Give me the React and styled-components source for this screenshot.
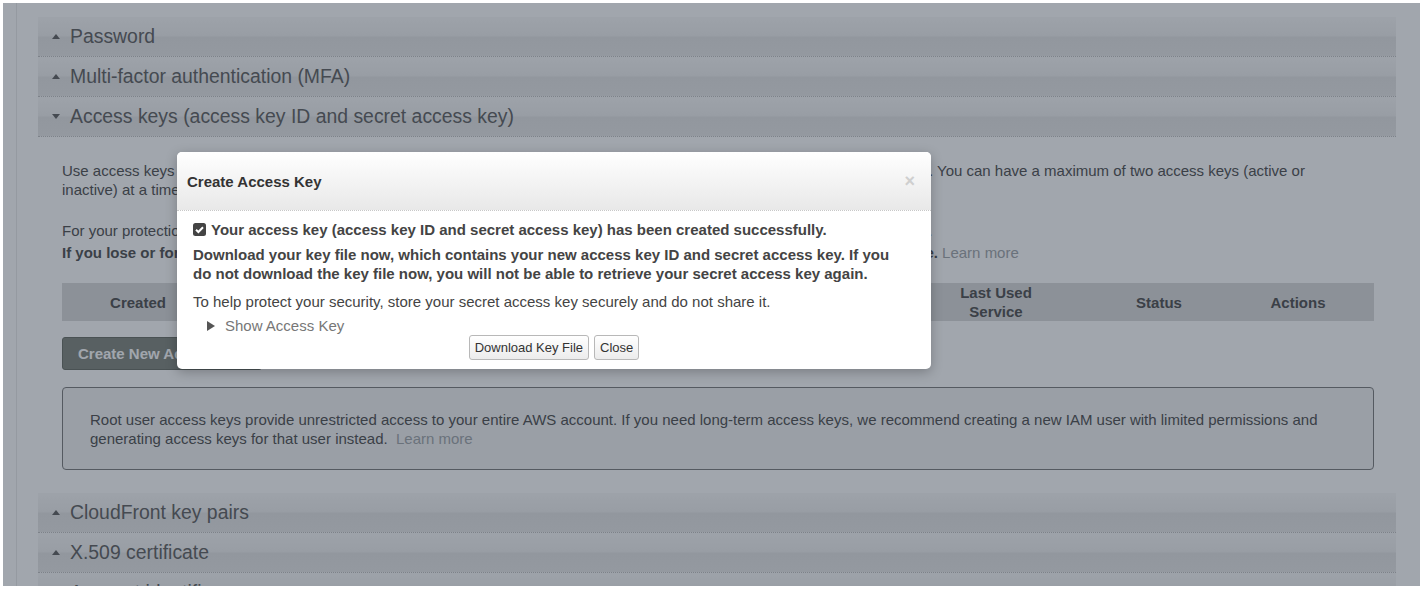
import React from 'react';
import styled, { createGlobalStyle } from 'styled-components';

const Global = createGlobalStyle`
  body {
    margin: 0;
    background: #fff;
    font-family: "Liberation Sans", Arial, sans-serif;
  }
`

const Page = styled.div`
  padding: 3px 5px 4px 3px;
`
const Frame = styled.div`
  position: relative;
  height: 583px;
  overflow: hidden;
  display: flex;
  background: #fff;
`
const LeftGutter = styled.div`
  width: 35px;
  flex-shrink: 0;
  background: linear-gradient(to right, transparent 13px, #ececec 13px, #ececec 14px, transparent 14px);
`
const RightGutter = styled.div`
  width: 24px;
  flex-shrink: 0;
`
const Panel = styled.div`
  flex: 1;
  padding-top: 14px;
`
const SectionHeader = styled.div`
  height: 40px;
  border-bottom: 1px dotted #c4c4c4;
  display: flex;
  align-items: center;
  gap: 10px;
  padding-left: 14px;
  box-sizing: border-box;
  font-size: 19.4px;
  color: #666;
  background: linear-gradient(to bottom, #f9f9f9 0%, #f1f1f1 48%, #e7e7e7 52%, #e9e9e9 100%);
`
const Caret = styled.span`
  width: 0;
  height: 0;
  border-left: 4px solid transparent;
  border-right: 4px solid transparent;
  ${p => p.$open ? 'border-top: 5px solid #666;' : 'border-bottom: 5px solid #666;'}
`
const Content = styled.div`
  padding: 24px 22px 23px 24px;
  font-size: 15px;
  color: #555;
`
const Para = styled.div`
  line-height: 19px;
  max-width: 1280px;
`
const Para2 = styled.div`
  line-height: 22px;
  margin-top: 21px;
`
const Link = styled.span`
  color: #a4a8ac;
  font-weight: normal;
`
const TableHead = styled.div`
  margin-top: 19px;
  height: 38px;
  display: grid;
  grid-template-columns: 152px 250px 232px 200px 200px 126px 152px;
  align-items: center;
  text-align: center;
  background: #dcdcdc;
  font-weight: bold;
  line-height: 19px;
  color: #555;
`
const PrimaryButton = styled.button`
  margin-top: 16px;
  width: 200px;
  height: 33px;
  border: 1px solid #6f746c;
  border-radius: 3px;
  background: #868b82;
  color: #fff;
  font: bold 15px "Liberation Sans", Arial, sans-serif;
  text-align: left;
  white-space: nowrap;
  overflow: hidden;
  padding: 0 0 0 15px;
`
const InfoBox = styled.div`
  margin-top: 17px;
  height: 81px;
  border: 1px solid #808080;
  border-radius: 4px;
  background: #f4f4f4;
  box-sizing: content-box;
  padding: 0 27px;
  display: flex;
  align-items: center;
  line-height: 19px;
`

const Overlay = styled.div`
  position: absolute;
  inset: 0;
  background: rgba(20, 32, 50, 0.4);
`
const Modal = styled.div`
  position: absolute;
  top: 149px;
  left: 174px;
  width: 754px;
  background: #fff;
  border-radius: 5px;
  box-shadow: 0 3px 12px rgba(0, 0, 0, 0.25);
  overflow: hidden;
  color: #444;
  font-size: 15px;
`
const ModalHeader = styled.div`
  height: 59px;
  border-bottom: 1px dotted #c8c8c8;
  background: linear-gradient(to bottom, #ffffff, #e8e8e8);
  display: flex;
  align-items: center;
  justify-content: space-between;
  padding: 1px 16px 0 10px;
  box-sizing: border-box;
`
const ModalTitle = styled.div`
  font-weight: bold;
  color: #333;
`
const CloseX = styled.span`
  color: #cfcfcf;
  font-size: 18px;
  font-weight: bold;
`
const ModalBody = styled.div`
  padding: 9px 16px 9px 16px;
  line-height: 19px;
`
const Success = styled.div`
  display: flex;
  align-items: center;
  gap: 5px;
  font-weight: bold;
`
const Strong = styled.div`
  font-weight: bold;
  margin-top: 6px;
  padding-right: 14px;
`
const Plain = styled.div`
  margin-top: 9px;
`
const ShowKey = styled.div`
  margin-top: 5px;
  padding-left: 14px;
  display: flex;
  align-items: center;
  gap: 10px;
  color: #777;
`
const Tri = styled.span`
  width: 0;
  height: 0;
  border-left: 8px solid #555;
  border-top: 5px solid transparent;
  border-bottom: 5px solid transparent;
`
const Actions = styled.div`
  display: flex;
  justify-content: center;
  gap: 5px;
`
const SmallButton = styled.button`
  height: 25px;
  padding: 0 5px;
  border: 1px solid #b8b8b8;
  border-radius: 3px;
  background: linear-gradient(to bottom, #ffffff, #ececec);
  color: #333;
  font: 13px "Liberation Sans", Arial, sans-serif;
`

const CheckIcon = () => (
  <svg width="13" height="13" viewBox="0 0 13 13">
    <rect width="13" height="13" rx="2.5" fill="#444" />
    <path d="M3 6.7 L5.4 9 L10 4.2" stroke="#fff" strokeWidth="2" fill="none" />
  </svg>
)

const Header = ({ open, children }) => (
  <SectionHeader>
    <Caret $open={open} />
    {children}
  </SectionHeader>
)

const columns = ['Created', 'Access Key ID', 'Last Used', 'Last Used Region', <>Last Used<br />Service</>, 'Status', 'Actions'];

export default function App() {
  return (
    <Page>
      <Global />
      <Frame>
        <LeftGutter />
        <Panel>
          <Header>Password</Header>
          <Header>Multi-factor authentication (MFA)</Header>
          <Header open>Access keys (access key ID and secret access key)</Header>
          <Content>
            <Para>
              Use access keys to make programmatic calls to AWS from the AWS CLI, Tools for PowerShell, AWS SDKs, or direct AWS API calls. You can have a maximum of two access keys (active or inactive) at a time.
            </Para>
            <Para2>
              <div>For your protection, you should never share your secret keys with anyone. As a best practice, we recommend frequent key rotation.</div>
              <div><b>If you lose or forget your secret key, you cannot retrieve it. Instead, create a new access key and make the old key inactive.</b> <Link>Learn more</Link></div>
            </Para2>
            <TableHead>
              {columns.map((c, i) => <div key={i}>{c}</div>)}
            </TableHead>
            <PrimaryButton>Create New Access Key</PrimaryButton>
            <InfoBox>
              <div>
                Root user access keys provide unrestricted access to your entire AWS account. If you need long-term access keys, we recommend creating a new IAM user with limited permissions and generating access keys for that user instead.&nbsp; <Link>Learn more</Link>
              </div>
            </InfoBox>
          </Content>
          <Header>CloudFront key pairs</Header>
          <Header>X.509 certificate</Header>
          <Header>Account identifiers</Header>
        </Panel>
        <RightGutter />
        <Overlay />
        <Modal>
          <ModalHeader>
            <ModalTitle>Create Access Key</ModalTitle>
            <CloseX>×</CloseX>
          </ModalHeader>
          <ModalBody>
            <Success>
              <CheckIcon />
              Your access key (access key ID and secret access key) has been created successfully.
            </Success>
            <Strong>
              Download your key file now, which contains your new access key ID and secret access key. If you do not download the key file now, you will not be able to retrieve your secret access key again.
            </Strong>
            <Plain>To help protect your security, store your secret access key securely and do not share it.</Plain>
            <ShowKey>
              <Tri />
              Show Access Key
            </ShowKey>
            <Actions>
              <SmallButton>Download Key File</SmallButton>
              <SmallButton>Close</SmallButton>
            </Actions>
          </ModalBody>
        </Modal>
      </Frame>
    </Page>
  );
}
